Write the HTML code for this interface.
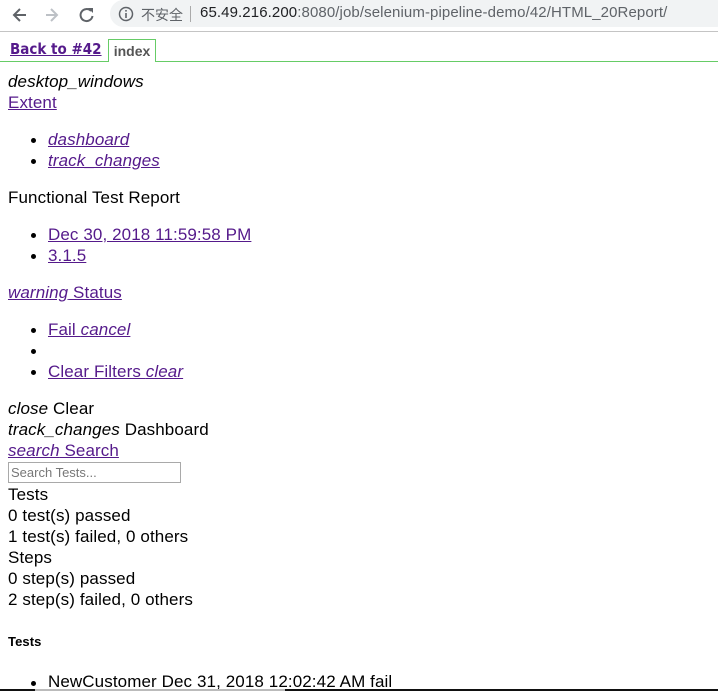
<!DOCTYPE html>
<html><head><meta charset="utf-8"><style>
body{margin:0;width:718px;height:691px;overflow:hidden;background:#fff;font-family:"Liberation Sans","Noto Sans CJK SC",sans-serif;font-size:17px;color:#000;position:relative}
.l{position:absolute;left:8px;white-space:nowrap;line-height:20px;letter-spacing:0.1px}
a{color:#551a8b;text-decoration:underline}
i{font-style:italic}
.b{position:absolute;left:31px;width:5px;height:5px;border-radius:50%;background:#000}
.li{left:48px}
</style></head><body>
<div style="position:absolute;left:0;top:0;width:718px;height:31px;background:#fff;border-bottom:1px solid #c4c4c4"></div>
<svg style="position:absolute;left:10px;top:5px" width="90" height="20" viewBox="0 0 90 20">
<path d="M16 10H5M10 4L4 10l6 6" stroke="#5f6368" stroke-width="2" fill="none"/>
<path d="M36 10h11M41 4l6 6-6 6" stroke="#bdc1c6" stroke-width="2" fill="none"/>
<path d="M81 6a6 6 0 1 0 1.5 5" stroke="#5f6368" stroke-width="2" fill="none"/><path d="M78 3h5v5z" fill="#5f6368"/>
</svg>
<div style="position:absolute;left:110px;top:0;width:620px;height:27px;background:#f1f3f4;border-radius:14px"></div>
<svg style="position:absolute;left:118px;top:6px" width="16" height="16"><circle cx="8" cy="8" r="6.5" stroke="#5f6368" stroke-width="1.5" fill="none"/><rect x="7.2" y="7" width="1.6" height="5" fill="#5f6368"/><rect x="7.2" y="4" width="1.6" height="1.6" fill="#5f6368"/></svg>
<div style="position:absolute;left:141px;top:5px;font-size:14px;color:#5f6368">不安全</div>
<div style="position:absolute;left:190px;top:6px;width:1px;height:16px;background:#aaa"></div>
<div style="position:absolute;left:200px;top:4px;font-size:15px;color:#5f6368;letter-spacing:0.1px"><span style="color:#202124">65.49.216.200</span>:8080/job/selenium-pipeline-demo/42/HTML_20Report/</div>
<div style="position:absolute;left:0;top:61px;width:718px;height:1px;background:#6c6"></div>
<a style="position:absolute;left:10px;top:40px;font-size:15px;font-weight:bold;color:#551a8b;font-family:'DejaVu Sans Condensed','Liberation Sans',sans-serif">Back to #42</a>
<div style="position:absolute;left:108px;top:39px;width:46px;height:22px;border:1px solid #6c6;border-bottom:none;background:#fff;font-size:14px;font-weight:bold;color:#555;text-align:center;line-height:22px">index</div>
<div class="l" style="top:72px"><i>desktop_windows</i></div>
<div class="l" style="top:93px"><a>Extent</a></div>
<div class="b" style="top:138px"></div><div class="l li" style="top:130px"><a><i>dashboard</i></a></div>
<div class="b" style="top:159px"></div><div class="l li" style="top:151px"><a><i>track_changes</i></a></div>
<div class="l" style="top:188px">Functional Test Report</div>
<div class="b" style="top:233px"></div><div class="l li" style="top:225px"><a>Dec 30, 2018 11:59:58 PM</a></div>
<div class="b" style="top:254px"></div><div class="l li" style="top:246px"><a>3.1.5</a></div>
<div class="l" style="top:283px"><a><i>warning</i> Status</a></div>
<div class="b" style="top:328px"></div><div class="l li" style="top:320px"><a>Fail <i>cancel</i></a></div>
<div class="b" style="top:349px"></div>
<div class="b" style="top:370px"></div><div class="l li" style="top:362px"><a>Clear Filters <i>clear</i></a></div>
<div class="l" style="top:399px"><i>close</i> Clear</div>
<div class="l" style="top:420px"><i>track_changes</i> Dashboard</div>
<div class="l" style="top:441px"><a><i>search</i> Search</a></div>
<div style="position:absolute;left:8px;top:462px;border:1px solid #a9a9a9;font-size:13px;color:#777;line-height:19px;padding-left:2px;box-sizing:border-box;width:173px;height:21px">Search Tests...</div>
<div class="l" style="top:485px">Tests</div>
<div class="l" style="top:506px">0 test(s) passed</div>
<div class="l" style="top:527px">1 test(s) failed, 0 others</div>
<div class="l" style="top:548px">Steps</div>
<div class="l" style="top:569px">0 step(s) passed</div>
<div class="l" style="top:590px">2 step(s) failed, 0 others</div>
<div class="l" style="top:632px;font-size:13px;font-weight:bold">Tests</div>
<div class="b" style="top:681px"></div><div class="l li" style="top:672px">NewCustomer Dec 31, 2018 12:02:42 AM fail</div>
<div style="position:absolute;left:0;top:689px;width:718px;height:2px;background:#111"></div>
<div style="position:absolute;left:35px;top:689px;width:250px;height:2px;background:#bbb"></div>
</body></html>
